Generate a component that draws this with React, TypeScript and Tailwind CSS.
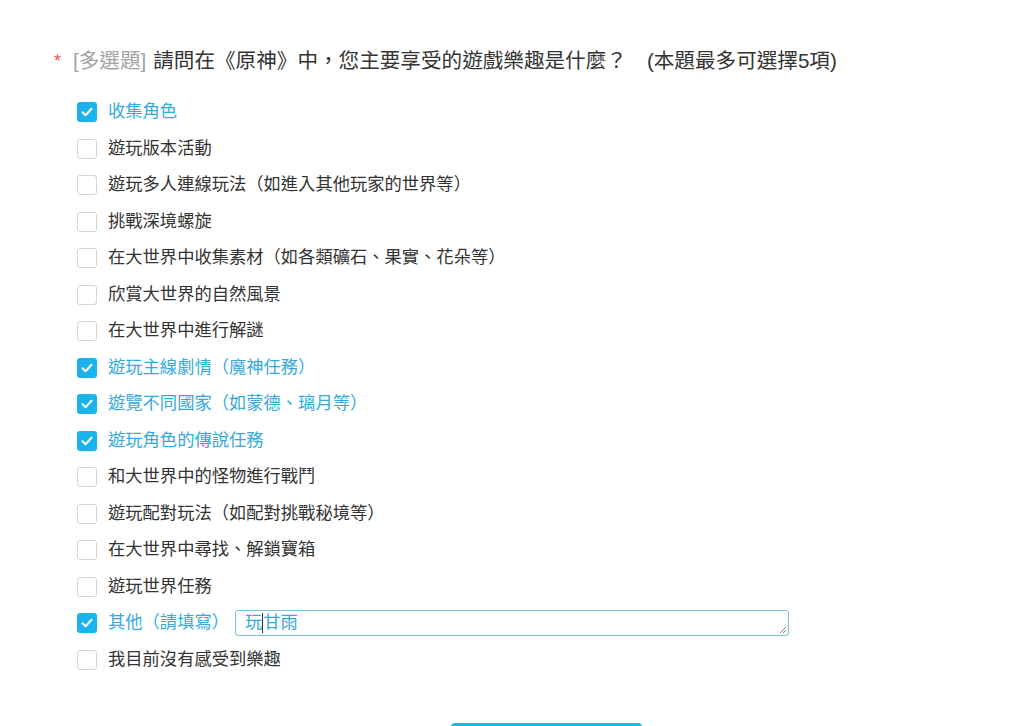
const OPTIONS = [
  { label: "收集角色", checked: true },
  { label: "遊玩版本活動", checked: false },
  { label: "遊玩多人連線玩法（如進入其他玩家的世界等）", checked: false },
  { label: "挑戰深境螺旋", checked: false },
  { label: "在大世界中收集素材（如各類礦石、果實、花朵等）", checked: false },
  { label: "欣賞大世界的自然風景", checked: false },
  { label: "在大世界中進行解謎", checked: false },
  { label: "遊玩主線劇情（魔神任務）", checked: true },
  { label: "遊覽不同國家（如蒙德、璃月等）", checked: true },
  { label: "遊玩角色的傳說任務", checked: true },
  { label: "和大世界中的怪物進行戰鬥", checked: false },
  { label: "遊玩配對玩法（如配對挑戰秘境等）", checked: false },
  { label: "在大世界中尋找、解鎖寶箱", checked: false },
  { label: "遊玩世界任務", checked: false },
  { label: "其他（請填寫）", checked: true, other: true },
  { label: "我目前沒有感受到樂趣", checked: false },
];

function Box({ checked }: { checked: boolean }) {
  if (checked) {
    return (
      <span className="flex items-center justify-center w-[20px] h-[20px] rounded-[3px] bg-[#1ab4ec] shrink-0">
        <svg width="14" height="14" viewBox="0 0 14 14" fill="none">
          <path d="M2.5 7.2 L5.6 10.2 L11.5 3.8" stroke="#fff" strokeWidth="2" strokeLinecap="round" strokeLinejoin="round" />
        </svg>
      </span>
    );
  }
  return <span className="w-[20px] h-[20px] rounded-[3px] border border-[#d4d4d4] bg-white shrink-0" />;
}

export default function App() {
  return (
    <div
      className="w-[1024px] h-[726px] overflow-hidden bg-white relative"
      style={{ fontFamily: '"Liberation Sans", "Noto Sans CJK TC", sans-serif' }}
    >
      <div className="pt-[47px] pl-[54px]">
        {/* Question */}
        <div className="flex items-center h-[28px] text-[20.6px] leading-[28px]">
          <span className="text-[#e5554f] text-[18px] mr-[12px]">*</span>
          <span className="text-[#a3a3a3]">[多選題]</span>
          <span className="text-[#333] ml-[7px]">請問在《原神》中，您主要享受的遊戲樂趣是什麼？</span>
          <span className="text-[#333] ml-[20px]">(本題最多可選擇5項)</span>
        </div>

        {/* Options */}
        <div className="mt-[19px] pl-[23px] flex flex-col">
          {OPTIONS.map((o) => (
            <div key={o.label} className="flex items-center h-[36.5px]">
              <Box checked={o.checked} />
              <span
                className={`ml-[11px] text-[17.3px] ${o.checked ? "text-[#35a9dc]" : "text-[#333]"}`}
              >
                {o.label}
              </span>
              {o.other && (
                <div className="relative ml-[6px] w-[554px] h-[26px] border border-[#78c5d6] rounded-[3px] flex items-center pl-[9px] text-[17.3px] text-[#35a9dc]">
                  <span>玩</span>
                  <span className="w-px h-[20px] bg-[#333]" />
                  <span>甘雨</span>
                  <svg className="absolute right-[1px] bottom-[1px]" width="9" height="9" viewBox="0 0 9 9">
                    <path d="M8 2 L2 8 M8 5 L5 8" stroke="#888" strokeWidth="1" />
                  </svg>
                </div>
              )}
            </div>
          ))}
        </div>
      </div>

      {/* Submit button (cut off) */}
      <div className="absolute left-[451px] top-[723px] w-[191px] h-[40px] rounded-[4px] bg-[#24b4e8]" />
    </div>
  );
}
